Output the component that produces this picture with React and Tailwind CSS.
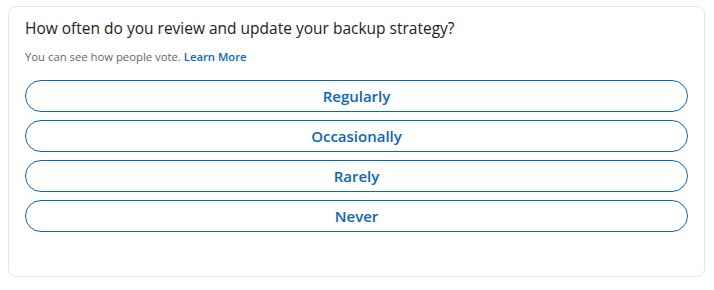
export default function App() {
  const options = ["Regularly", "Occasionally", "Rarely", "Never"];
  return (
    <div className="w-[714px] h-[290px] bg-white pt-[6px] px-[8px]" style={{ fontFamily: '"Open Sans", "Noto Sans", sans-serif' }}>
      <div className="w-[697px] h-[271px] border border-[#e6e6e6] rounded-[8px] px-[16px] pt-[9px]">
        <h2 className="text-[15.5px] leading-[24px] text-[#1d1d1d] font-normal">How often do you review and update your backup strategy?</h2>
        <p className="mt-[9px] text-[11.3px] leading-[16px] text-[#666666]">
          You can see how people vote. <span className="text-[#0a66c2] font-semibold">Learn More</span>
        </p>
        <div className="mt-[15px] flex flex-col gap-[8px]">
          {options.map((o) => (
            <button key={o} className="h-[32px] w-full rounded-full border border-[#0a66c2] text-[#0a66c2] text-[15px] font-semibold flex items-center justify-center">
              {o}
            </button>
          ))}
        </div>
      </div>
    </div>
  );
}
